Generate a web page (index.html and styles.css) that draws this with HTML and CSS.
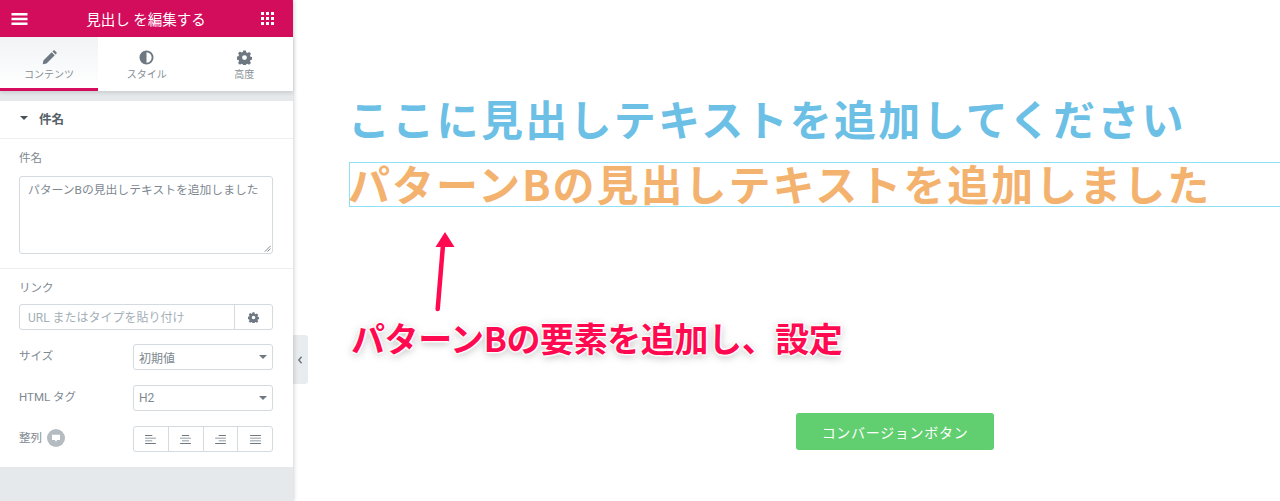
FILE: index.html
```html
<!DOCTYPE html>
<html lang="ja">
<head>
<meta charset="utf-8">
<title>見出し を編集する</title>
<link rel="stylesheet" href="styles.css">
</head>
<body>
<div class="app">
  <aside class="panel">
    <header class="topbar">
      <svg class="ico-menu" viewBox="0 0 16 12"><path d="M0 0h16v2.400H0zM0 4.800h16v2.400H0zM0 9.600h16V12H0z"/></svg>
      <span class="topbar-title">見出し を編集する</span>
      <svg class="ico-grid" viewBox="0 0 13 13"><path d="M0 0h3v3H0zM5 0h3v3H5zM10 0h3v3h-3zM0 5h3v3H0zM5 5h3v3H5zM10 5h3v3h-3zM0 10h3v3H0zM5 10h3v3H5zM10 10h3v3h-3z"/></svg>
    </header>
    <nav class="tabs">
      <div class="tab tab-active">
        <svg class="tab-ico" viewBox="0 0 16 16"><path d="M1.500 11.200 10.300 2.400l3.300 3.300-8.800 8.800-4 .7zM11.200 1.500l.9-.9c.4-.4 1-.4 1.400 0l1.900 1.900c.4.4.4 1 0 1.400l-.9.9z"/></svg>
        <span>コンテンツ</span>
      </div>
      <div class="tab">
        <svg class="tab-ico" viewBox="0 0 16 16"><path fill-rule="evenodd" d="M8 .5a7.500 7.500 0 1 0 0 15 7.500 7.500 0 0 0 0-15zm0 2a5.500 5.500 0 0 1 0 11z"/></svg>
        <span>スタイル</span>
      </div>
      <div class="tab">
        <svg class="tab-ico" viewBox="0 0 16 16"><path fill-rule="evenodd" d="M6.600.5h2.800l.4 2 1.300.6 1.800-1.100 2 2-1.100 1.800.6 1.300 2 .4v2.800l-2 .4-.6 1.300 1.100 1.800-2 2-1.800-1.100-1.300.6-.4 2H6.600l-.4-2-1.300-.6-1.800 1.100-2-2 1.100-1.800-.6-1.300-2-.4V7l2-.4.6-1.300L1.100 3.500l2-2 1.800 1.100 1.300-.6zM8 5.500a2.600 2.600 0 1 0 0 5.200 2.600 2.600 0 0 0 0-5.200z"/></svg>
        <span>高度</span>
      </div>
    </nav>
    <div class="section">
      <div class="section-head"><i class="caret caret-dark"></i><span>件名</span></div>
      <div class="field field-title">
        <label class="lbl">件名</label>
        <div class="textarea">パターンBの見出しテキストを追加しました
          <svg class="grip" viewBox="0 0 8 8"><path d="M7.500 1 1 7.500M7.500 4 4 7.500" stroke="#777" fill="none"/></svg>
        </div>
      </div>
      <div class="field field-link">
        <label class="lbl">リンク</label>
        <div class="url">
          <span class="url-text">URL またはタイプを貼り付け</span>
          <span class="url-btn"><svg viewBox="0 0 16 16"><path fill-rule="evenodd" d="M6.600.5h2.800l.4 2 1.300.6 1.800-1.100 2 2-1.100 1.800.6 1.300 2 .4v2.800l-2 .4-.6 1.300 1.100 1.800-2 2-1.800-1.100-1.300.6-.4 2H6.600l-.4-2-1.300-.6-1.800 1.100-2-2 1.100-1.800-.6-1.300-2-.4V7l2-.4.6-1.300L1.100 3.500l2-2 1.800 1.100 1.300-.6zM8 5.500a2.600 2.600 0 1 0 0 5.200 2.600 2.600 0 0 0 0-5.200z"/></svg></span>
        </div>
      </div>
      <div class="row row-size">
        <label class="lbl">サイズ</label>
        <div class="select"><span>初期値</span><i class="caret"></i></div>
      </div>
      <div class="row row-tag">
        <label class="lbl">HTML タグ</label>
        <div class="select"><span>H2</span><i class="caret"></i></div>
      </div>
      <div class="row row-align">
        <label class="lbl lbl-device">整列 <span class="device"><svg viewBox="0 0 10 10"><path d="M0 1h10v6.500H6V9H4V7.500H0z"/></svg></span></label>
        <div class="aligns">
          <span class="al"><svg viewBox="0 0 12 10"><path d="M0 0h8v1H0zM0 3h12v1H0zM0 6h8v1H0zM0 9h12v1H0z"/></svg></span>
          <span class="al"><svg viewBox="0 0 12 10"><path d="M2 0h8v1H2zM0 3h12v1H0zM2 6h8v1H2zM0 9h12v1H0z"/></svg></span>
          <span class="al"><svg viewBox="0 0 12 10"><path d="M4 0h8v1H4zM0 3h12v1H0zM4 6h8v1H4zM0 9h12v1H0z"/></svg></span>
          <span class="al"><svg viewBox="0 0 12 10"><path d="M0 0h12v1H0zM0 3h12v1H0zM0 6h12v1H0zM0 9h12v1H0z"/></svg></span>
        </div>
      </div>
    </div>
  </aside>
  <div class="collapse"><svg viewBox="0 0 6 10"><path d="M5 1 1.500 5 5 9" fill="none" stroke="#6d7882" stroke-width="1.800"/></svg></div>
  <main class="canvas">
    <h2 class="h-a">ここに見出しテキストを追加してください</h2>
    <div class="h-b-box"><h2 class="h-b">パターンBの見出しテキストを追加しました</h2></div>
    <div class="cta-row"><a class="cta">コンバージョンボタン</a></div>
    <svg class="arrow" viewBox="0 0 30 90"><path d="M10.700 79 16 15" stroke="#ff0a50" stroke-width="4.500" stroke-linecap="round" fill="none"/><path d="M18 2 8.500 17h19z" fill="#ff0a50"/></svg>
    <p class="callout">パターンBの要素を追加し、設定</p>
  </main>
</div>
</body>
</html>
```
FILE: styles.css
```css
* { box-sizing: border-box; }
html, body { margin: 0; height: 501px; overflow: hidden; background: #fff; }
body { font-family: "Roboto", "Noto Sans CJK JP", sans-serif; color: #6d7882; }
.app { display: flex; height: 501px; }

.panel { width: 293px; flex: none; background: #e6e9ec; box-shadow: 1px 0 4px rgba(0,0,0,.18); position: relative; z-index: 2; }
.topbar { height: 37px; background: #d30c5c; display: flex; align-items: center; justify-content: space-between; padding: 0 19px 0 11px; color: #fff; }
.ico-menu { width: 17px; height: 12px; fill: #fff; }
.ico-grid { width: 13px; height: 13px; fill: #fff; }
.topbar-title { font-size: 14.500px; margin-left: 3px; }

.tabs { height: 54px; background: #fff; display: flex; box-shadow: 0 2px 4px rgba(0,0,0,.12); position: relative; }
.tab { flex: 1; display: flex; flex-direction: column; align-items: center; padding-top: 13px; font-size: 10px; line-height: 14px; color: #868f97; }
.tab-active { background: linear-gradient(#f1f3f5, #fff); border-bottom: 3px solid #d30c5c; flex: 0 0 98px; }
.tab-ico { width: 15px; height: 15px; fill: #6d7882; margin-bottom: 3px; }

.section { margin-top: 10px; background: #fff; height: 366px; }
.section-head { height: 38px; display: flex; align-items: center; padding: 0 0 3px 20px; font-size: 12.500px; font-weight: 700; color: #556068; border-bottom: 1px solid #eceeef; gap: 11px; }
.caret { width: 0; height: 0; border: 4px solid transparent; border-top: 4px solid #6d7882; border-bottom: 0; display: block; }
.caret-dark { border-top-color: #495157; }

.lbl { font-size: 11.500px; line-height: 16px; color: #7d8890; display: block; }
.field { padding: 0 20px 0 19px; }
.field-title { height: 130px; padding-top: 11px; border-bottom: 1px solid #eceeef; }
.textarea { margin-top: 10px; width: 254px; height: 78px; border: 1px solid #d5dadf; border-radius: 3px; padding: 6px 8px; font-size: 11.800px; line-height: 14px; color: #7d8890; position: relative; }
.grip { position: absolute; right: 1px; bottom: 1px; width: 7px; height: 7px; }
.field-link { padding-top: 11px; }
.url { margin-top: 8px; width: 254px; height: 26px; border: 1px solid #d5dadf; border-radius: 3px; display: flex; align-items: center; }
.url-text { flex: 1; padding-left: 8px; padding-bottom: 2px; font-size: 12px; color: #a4afb7; white-space: nowrap; }
.url-btn { width: 38px; height: 100%; border-left: 1px solid #d5dadf; display: flex; align-items: center; justify-content: center; }
.url-btn svg { width: 11px; height: 11px; fill: #6d7882; }

.row { display: flex; align-items: center; justify-content: space-between; padding: 0 20px 0 19px; }
.row .lbl { margin-bottom: 2px; }
.row-size { margin-top: 14px; }
.row-tag { margin-top: 15px; }
.row-align { margin-top: 15px; }
.select { width: 140px; height: 26px; border: 1px solid #d5dadf; border-radius: 3px; display: flex; align-items: center; justify-content: space-between; padding: 0 5px 0 5px; font-size: 12px; color: #7d8890; }
.lbl-device { display: flex; align-items: center; gap: 5px; }
.device { width: 18px; height: 18px; border-radius: 50%; background: #b4bbc1; display: flex; align-items: center; justify-content: center; }
.device svg { width: 8px; height: 8px; fill: #fff; }
.aligns { width: 140px; height: 26px; border: 1px solid #d5dadf; border-radius: 3px; display: flex; }
.al { flex: 1; display: flex; align-items: center; justify-content: center; border-left: 1px solid #d5dadf; }
.al:first-child { border-left: 0; }
.al svg { width: 11px; height: 9px; fill: #6d7882; }

.collapse { position: absolute; left: 293px; top: 335px; width: 15px; height: 49px; background: #e9ecee; border-radius: 0 3px 3px 0; display: flex; align-items: center; justify-content: center; z-index: 1; padding-right: 2px; }
.collapse svg { width: 6px; height: 8px; }

.canvas { flex: 1; position: relative; padding: 90px 0 0 55px; font-family: "Noto Sans CJK JP", sans-serif; }
.h-a, .h-b { margin: 0; white-space: nowrap; font-weight: 700; }
.h-a { color: #6cc0e6; font-size: 42px; line-height: 55px; letter-spacing: 2.300px; }
.h-b-box { margin: 17px 0 0 1px; height: 45px; border: 1px solid #8de0f5; border-right: 0; }
.h-b { color: #f4b26f; font-size: 42px; line-height: 40px; letter-spacing: 2px; margin-left: -2px; }
.cta-row { margin: 206px 0 0 0; padding-left: 448px; }
.cta { width: 198px; height: 37px; background: #61ce70; border-radius: 3px; color: #fff; display: flex; align-items: center; justify-content: center; font-size: 14px; letter-spacing: .7px; }

.arrow { position: absolute; left: 134px; top: 230px; width: 30px; height: 90px; }
.callout { position: absolute; left: 58px; top: 316px; margin: 0; font-size: 34px; line-height: 44px; font-weight: 700; color: #ff0a50; white-space: nowrap; letter-spacing: -.4px; text-shadow: 0 0 2px #fff, 0 0 2px #fff, 1px 1px 2px #fff, -1px -1px 2px #fff, 1px -1px 2px #fff, -1px 1px 2px #fff, 0 2px 8px rgba(0,0,0,.35); }
```
